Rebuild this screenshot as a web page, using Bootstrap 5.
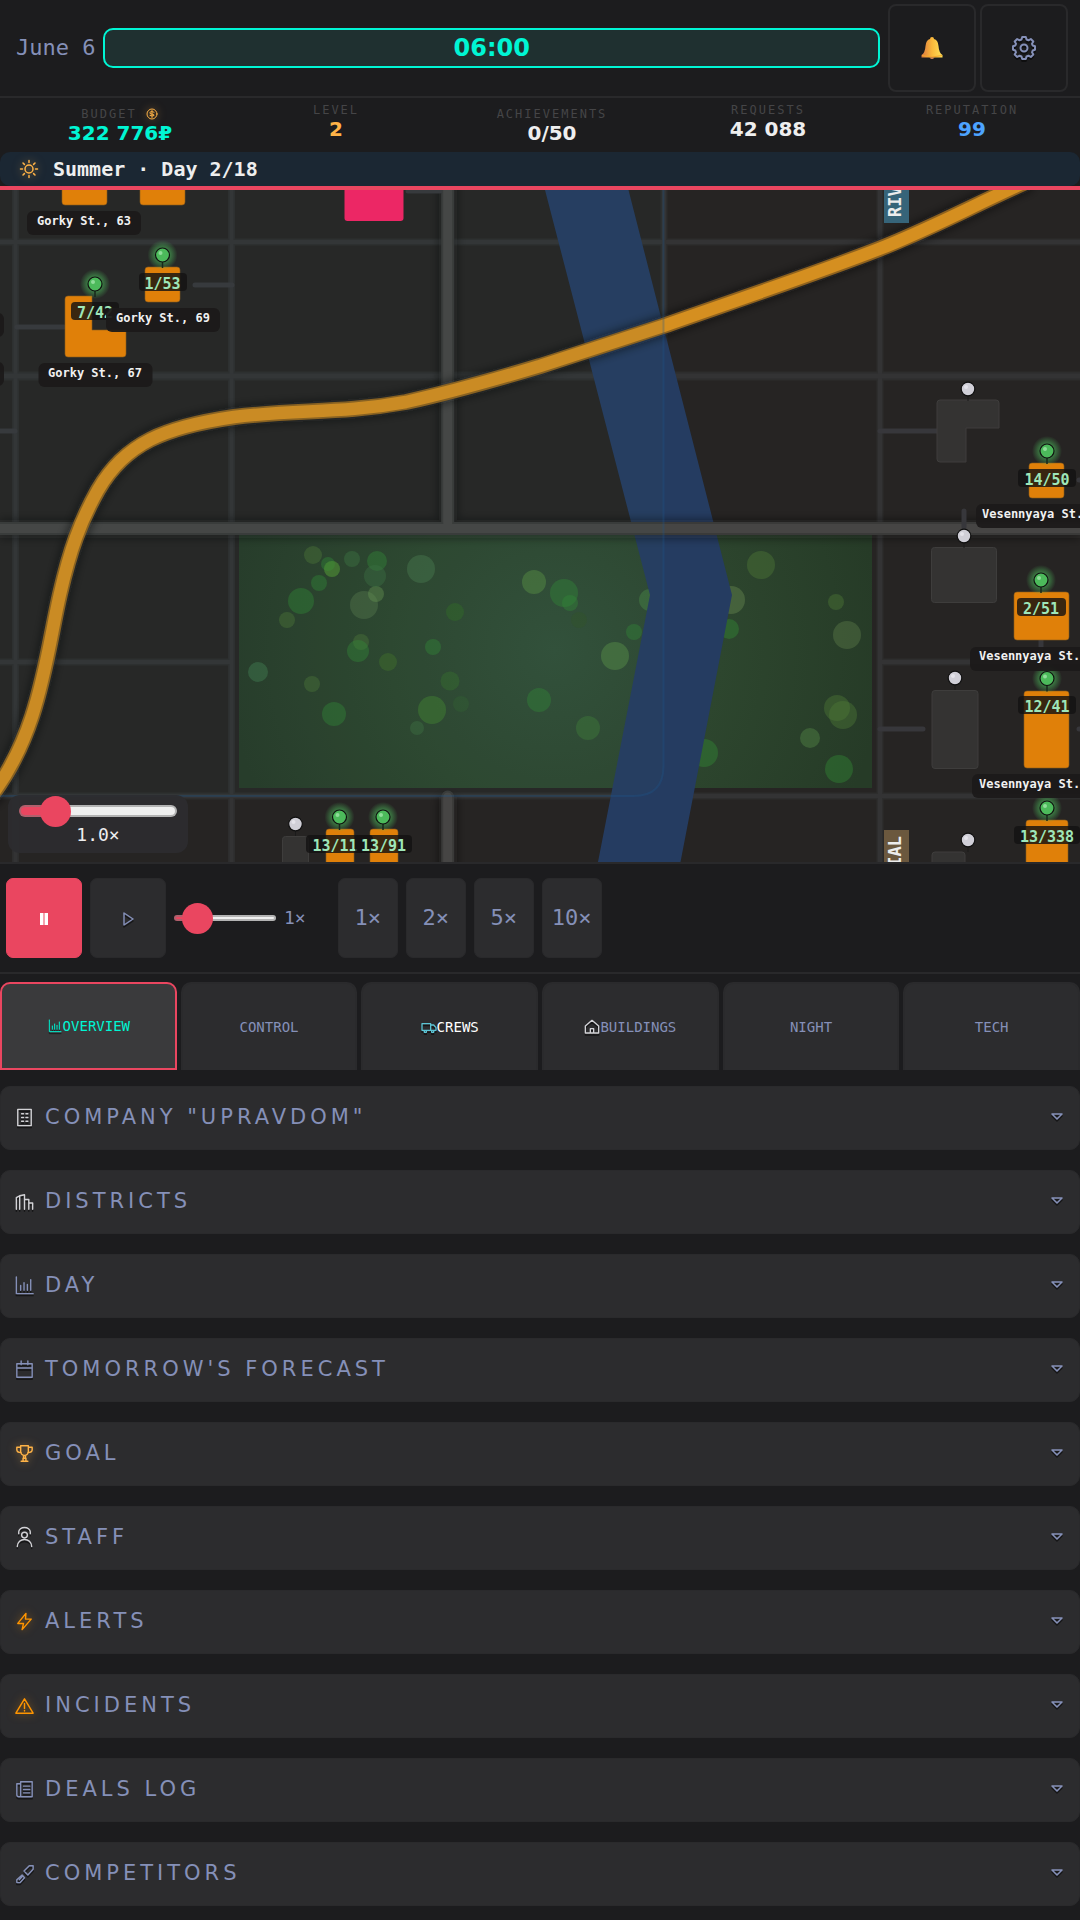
<!DOCTYPE html>
<html lang="en">
<head>
<meta charset="utf-8">
<meta name="viewport" content="width=device-width, initial-scale=1">
<title>Upravdom</title>
<link href="https://cdn.jsdelivr.net/npm/bootstrap@5.3.0/dist/css/bootstrap.min.css" rel="stylesheet">
<script src="https://cdn.jsdelivr.net/npm/bootstrap@5.3.0/dist/js/bootstrap.bundle.min.js"></script>
<style>
:root{--bg:#1c1c1e;--surface:#2c2c2e;--line:#29292b;--muted:#8590b8;--accent:#ea4660;--mint:#00f5d4;--gold:#ffb347;--mono:"DejaVu Sans Mono",monospace;--wide:"DejaVu Sans",sans-serif}
body{background:var(--bg);color:#eee;font-family:var(--mono);line-height:24px;overflow-x:hidden}
button{font-family:var(--mono)}
.ico{fill:none;stroke:currentColor;stroke-width:1.5;stroke-linecap:round;stroke-linejoin:round;filter:drop-shadow(0 2px 0 rgba(0,0,0,.5));flex:none}
.ico-gold{color:var(--gold);filter:drop-shadow(0 0 4px rgba(255,179,71,.5))}
.ico-warn{color:#ff9500;filter:drop-shadow(0 0 4px rgba(255,149,0,.5))}
.ico-pale{color:#d2d2d6}
.topline{padding:4px 12px 4px 16px;border-bottom:2px solid var(--line)}
.today{font-size:22px;color:var(--muted)}
.clock{height:40px;border:2px solid var(--mint);border-radius:10px;background:#1f3030;color:var(--mint);font:700 24px/36px var(--wide)}
.tool{width:88px;height:88px;border:2px solid var(--line);border-radius:8px;background:none;color:var(--muted)}
.stats{display:grid;grid-template-columns:repeat(4,9fr) 8fr;padding:4px 12px 8px}
.stat-name{font-size:12px;line-height:16px;letter-spacing:2px;color:#454547;text-transform:uppercase}
.stat-num{font:700 20px/22px var(--wide)}
.season{height:34px;padding-left:17px;border-radius:10px;background:#1b2733;font-size:20px;font-weight:700;gap:12px}
.city{height:35vh;min-height:480px;border-top:4px solid var(--accent);border-bottom:2px solid var(--line);box-sizing:content-box;background:#262423}
.city svg.plan{display:block;width:100%;height:100%}
.plan text{font-family:var(--mono);font-weight:700}
.zoombox{left:8px;bottom:9px;width:180px;height:58px;background:rgba(44,44,47,.95);border-radius:12px;padding:0 11px}
.zoombox output{font-size:18px;line-height:16px}
.slide{appearance:none;-webkit-appearance:none;display:block;background:none;height:32px;margin:0;padding:0}
.slide::-webkit-slider-runnable-track{height:var(--track);border:2px solid rgba(120,120,120,.5);border-radius:6px;background:linear-gradient(90deg,var(--accent) 0 20%,#efefef 20%);background-origin:border-box}
.slide::-webkit-slider-thumb{-webkit-appearance:none;width:31px;height:31px;border:0;border-radius:50%;background:var(--accent);margin-top:calc((var(--track) - 35px) / 2)}
.controls{padding:14px 6px;border-bottom:2px solid var(--line);gap:8px}
.key{height:80px;width:76px;border:1px solid var(--line);border-radius:7px;background:var(--surface);color:var(--muted);font-size:22px;padding:0}
.key-speed{width:60px}
.key-on{background:var(--accent);border-color:var(--accent);color:#fff}
.tabs{padding-top:8px;gap:4px}
.tabs button{flex:1 1 0;min-width:0;height:88px;border:2px solid #2a2a2c;border-bottom:0;border-radius:10px 10px 0 0;background:var(--surface);color:var(--muted);font-size:14px;padding:0}
.tabs button.on{border:2px solid var(--accent);background:#3a3a3c;color:var(--mint)}
.panels{padding:16px 0 14px;gap:20px}
.fold{height:64px;padding:0 12px 2px;border:1px solid #2a2a2c;border-radius:10px;background:var(--surface);color:var(--muted);gap:9px}
.fold-name{font:400 21px/24px var(--wide);letter-spacing:4px;text-transform:uppercase}
</style>
</head>
<body>
<svg width="0" height="0" class="position-absolute" aria-hidden="true"><defs>
<symbol id="i-chart" viewBox="0 0 24 24"><path d="M3.5 3v17.500H21M8 17v-5M11.500 17V9M15 17v-6M18.500 17V6"/></symbol>
<symbol id="i-home" viewBox="0 0 24 24"><path d="M2 21V10.500L12 2l10 8.500V21zM9.500 21v-6.500h5V21"/></symbol>
<symbol id="i-truck" viewBox="0 0 24 24"><path d="M1.500 7h13v10h-13zM14.500 9h4.500l3.500 4v4h-8M5 17v3h3v-3M16 17v3h3v-3"/></symbol>
<symbol id="i-block" viewBox="0 0 24 24"><path d="M5 3.500h14v17H5zM9 8h2M13.500 8h2M9 12h2M13.500 12h2M9 16h2M13.500 16h2"/></symbol>
<symbol id="i-district" viewBox="0 0 24 24"><path d="M3.500 20V8L7 6v14M7 6l5-1v15M12 10h4.500v10M16.500 13.500h4V20"/></symbol>
<symbol id="i-cal" viewBox="0 0 24 24"><path d="M4 6h16v14H4zM4 10.500h16M8.500 3v4M15.500 3v4"/></symbol>
<symbol id="i-cup" viewBox="0 0 24 24"><path d="M8 4h8v6a4 4 0 0 1-8 0zM8 5.500H4V8q0 3 4.500 3M16 5.500h4V8q0 3-4.500 3M11 14v3h2v-3M10.500 17v3M13.500 17v3M8.500 20h7"/></symbol>
<symbol id="i-staff" viewBox="0 0 24 24"><path d="M4.500 21.500c0-10 15-10 15 0M6 8V6a6 4.500 0 0 1 12 0v2"/><circle cx="12" cy="9.500" r="3"/></symbol>
<symbol id="i-bolt" viewBox="0 0 24 24"><path d="M13.500 3.500 5 14h6l-1.500 6.500L19 9.500h-6z"/></symbol>
<symbol id="i-warn" viewBox="0 0 24 24"><path d="M12 5 21 20H3zM12 10v5M12 17.300v.4"/></symbol>
<symbol id="i-log" viewBox="0 0 24 24"><path d="M8 4h12v15.500H6a2 2 0 0 1-2-2V6h4M8 4v15M11 8.500h6.500M11 12h6.500M11 15.500h6.500"/></symbol>
<symbol id="i-rival" viewBox="0 0 24 24"><path d="M11.500 9.500 17 4h4v3.500l-5.500 6zM9.500 13.500 4 18.500v3h3.500l4.500-5zM6.500 18.500l3-3"/></symbol>
<symbol id="i-down" viewBox="0 0 20 20"><path d="M5 7h10l-5 5z"/></symbol>
<symbol id="i-gear" viewBox="0 0 24 24"><circle cx="12" cy="12" r="3.500"/><path d="M9.500 3.500 10.200 1h3.600l.7 2.500 2 .8 2.300-1.300 2.500 2.500L20 7.800l.7 1.700L23 10.200v3.600l-2.300.7-.7 1.800 1.300 2.200-2.500 2.500-2.300-1.300-2 .8-.7 2.500h-3.600l-.7-2.500-2-.8L5.200 21l-2.500-2.500L4 16.300l-.7-1.800L1 13.800v-3.600l2.300-.7L4 7.800 2.700 5.500 5.200 3l2.300 1.300z"/></symbol>
</defs></svg>

<header>
<div class="topline d-flex align-items-center gap-2">
<span class="today">June 6</span>
<div class="clock flex-grow-1 text-center">06:00</div>
<div class="d-flex gap-1">
<button type="button" class="tool" aria-label="Notifications"><svg width="22" height="24" viewBox="0 0 22 24"><defs><linearGradient id="bell" x1="0" x2="1"><stop offset="0" stop-color="#d9773f"/><stop offset=".5" stop-color="#fbb93b"/><stop offset="1" stop-color="#ffe25a"/></linearGradient></defs><path d="M11 1q2 0 2 2 4 1 4.500 7 .5 7 4 9v2.500H.5V19q3.500-2 4-9Q5 4 9 3q0-2 2-2z" fill="url(#bell)"/><path d="M1 19.500q10 3 20 0" stroke="#f3a62c" fill="none"/><path d="M8.500 21.500h5q-2.500 3-5 0z" fill="#d98a5b"/></svg></button>
<button type="button" class="tool" aria-label="Settings"><svg class="ico" width="24" height="24" style="stroke-width:2"><use href="#i-gear"/></svg></button>
</div>
</div>
<div class="stats text-center">
<div class="pt-1"><div class="stat-name d-flex justify-content-center align-items-center gap-2"><span>Budget</span><svg class="ico ico-gold" width="14" height="14" viewBox="0 0 14 14" style="stroke-width:1"><circle cx="7" cy="7" r="5"/><path d="M9 5.200q-4-1.500-4 .5t2 1.300q2.500.5 2 1.500-1.500 1-4 0M7 3.500v7"/></svg></div><div class="stat-num" style="color:var(--mint)">322 776₽</div></div>
<div><div class="stat-name">Level</div><div class="stat-num" style="color:var(--gold)">2</div></div>
<div class="pt-1"><div class="stat-name">Achievements</div><div class="stat-num">0/50</div></div>
<div><div class="stat-name">Requests</div><div class="stat-num">42 088</div></div>
<div><div class="stat-name">Reputation</div><div class="stat-num" style="color:#4da3ff">99</div></div>
</div>
<div class="season d-flex align-items-center"><svg class="ico ico-gold" width="24" height="24" viewBox="0 0 24 24"><circle cx="12" cy="12" r="4"/><path d="M12 3.500v2M12 18.500v2M3.500 12h2M18.500 12h2M6 6l1.400 1.400M16.600 16.600 18 18M18 6l-1.400 1.400M7.400 16.600 6 18"/></svg><span>Summer · Day 2/18</span></div>
</header>

<main>
<section class="city position-relative overflow-hidden" aria-label="City map">
<svg class="plan" viewBox="0 190 1080 672" preserveAspectRatio="xMidYMid slice">
<defs>
<radialGradient id="lawn" gradientUnits="userSpaceOnUse" cx="555" cy="650" r="330"><stop offset="0" stop-color="#325038"/><stop offset=".5" stop-color="#2d462e"/><stop offset="1" stop-color="#263b27"/></radialGradient>
<radialGradient id="glow"><stop offset=".4" stop-color="#4cba5b" stop-opacity=".65"/><stop offset="1" stop-color="#4cba5b" stop-opacity="0"/></radialGradient>
<filter id="haze" x="-5%" y="-5%" width="110%" height="110%"><feGaussianBlur stdDeviation="5"/></filter>
<g id="pin-on"><circle r="15" fill="url(#glow)"/><path d="M0 7v6" stroke="#18291c" stroke-width="1.500"/><circle r="7" fill="#4cba5b" stroke="#101010" stroke-width="1.200"/><circle cx="-2" cy="-2" r="2" fill="#8fdc99"/></g>
<g id="pin-off"><path d="M0 7v5" stroke="#1b1b1b"/><circle r="6.800" fill="#d0cfd7" stroke="#101010" stroke-width="1.200"/><circle cx="-2" cy="-2" r="2" fill="#e4e3ea"/></g>
</defs>
<g fill="none" stroke="#2d2d2d" stroke-width="7"><path d="M15.500 190v672M231.500 190v672M664 190v338M880 190v672M0 242h1080M0 662h231M880 662h200M0 796h1080"/><path d="M0 376h1080" stroke-width="9"/></g>
<g fill="none" stroke="#333334" stroke-width="4"><path d="M15.500 190v672M231.500 190v672M664 190v338M880 190v672M0 242h1080M0 662h231M880 662h200M0 796h1080"/><path d="M0 376h1080" stroke-width="5"/></g>
<rect x="239" y="530" width="633" height="258" fill="url(#lawn)"/>
<g fill-opacity=".42">
<g fill="#4f7a36"><circle cx="313" cy="555" r="9"/><circle cx="332" cy="569" r="8"/><circle cx="287" cy="620" r="8"/><circle cx="312" cy="684" r="8"/><circle cx="364" cy="605" r="14" fill="#587d4c"/><circle cx="376" cy="594" r="8" fill="#6a9850"/><circle cx="361" cy="642" r="8"/><circle cx="534" cy="582" r="12" fill="#609a45"/><circle cx="615" cy="656" r="14" fill="#609a4a"/><circle cx="761" cy="565" r="14"/><circle cx="836" cy="602" r="8"/><circle cx="847" cy="635" r="14" fill="#5d7d49"/><circle cx="731" cy="600" r="14" fill="#6a8a50"/><circle cx="837" cy="708" r="13"/><circle cx="843" cy="715" r="14"/><circle cx="810" cy="738" r="10" fill="#568a48"/></g>
<g fill="#338a35"><circle cx="328" cy="564" r="7"/><circle cx="332" cy="569" r="8" fill="#4f9a2f"/><circle cx="319" cy="583" r="8"/><circle cx="301" cy="601" r="13"/><circle cx="352" cy="559" r="8" fill="#3d7a40"/><circle cx="377" cy="561" r="10"/><circle cx="375" cy="576" r="11" fill="#3c7340"/><circle cx="421" cy="569" r="14" fill="#4d8050"/><circle cx="455" cy="612" r="9" fill="#337024"/><circle cx="433" cy="647" r="8"/><circle cx="358" cy="651" r="11"/><circle cx="388" cy="662" r="9" fill="#437828"/><circle cx="258" cy="672" r="10" fill="#458555"/><circle cx="334" cy="714" r="12"/><circle cx="450" cy="681" r="9.500" fill="#37732c"/><circle cx="432" cy="710" r="14" fill="#458e30"/><circle cx="461" cy="704" r="8" fill="#31602f"/><circle cx="417" cy="728" r="7" fill="#3d7540"/><circle cx="564" cy="593" r="14"/><circle cx="570" cy="603" r="8"/><circle cx="579" cy="620" r="8" fill="#315327"/><circle cx="634" cy="632" r="8"/><circle cx="650" cy="600" r="11" fill="#4d9048"/><circle cx="539" cy="700" r="12"/><circle cx="588" cy="728" r="12" fill="#408038"/><circle cx="729" cy="629" r="10"/><circle cx="704" cy="753" r="14"/><circle cx="839" cy="769" r="14"/></g>
</g>
<path d="M545 190h83.500L732 595 680.500 862H598L650 595z" fill="#253c61"/>
<g fill="none"><path d="M447.700 180v342M447.700 797v75M0 529h1080" stroke="#151515" stroke-opacity=".5" stroke-width="18" filter="url(#haze)"/><path d="M447.700 180v348M447.700 797v75M-8 528.500h1096" stroke="#3a3a39" stroke-width="13" stroke-linecap="round"/><path d="M447.700 180v343M447.700 797v75M-8 528.500h1096" stroke="#464544" stroke-width="9" stroke-linecap="round"/></g>
<g stroke="#37373b" stroke-width="5" stroke-linecap="round" fill="none"><path d="M195 285h37M17 327h47M-3 431h18M408 191h32M880 431h57M880 729h43M964 511v16M1041 640v9M1079 480h5M1079 729h5"/></g>
<g fill="none"><path d="M-12 800C40 735 46 655 60 594 70 550 80 522 98 490c27-47 67-63 136-73 66-8 106-3 172-15 54-12 94-24 134-36 80-26 120-39 123-40 77-27 157-54 216-77 51-20 91-42 151-69" stroke="#111" stroke-opacity=".55" stroke-width="20" filter="url(#haze)"/><path d="M-12 800C40 735 46 655 60 594 70 550 80 522 98 490c27-47 67-63 136-73 66-8 106-3 172-15 54-12 94-24 134-36 80-26 120-39 123-40 77-27 157-54 216-77 51-20 91-42 151-69" stroke="#8f621e" stroke-width="16"/><path d="M-12 800C40 735 46 655 60 594 70 550 80 522 98 490c27-47 67-63 136-73 66-8 106-3 172-15 54-12 94-24 134-36 80-26 120-39 123-40 77-27 157-54 216-77 51-20 91-42 151-69" stroke="#d58f20" stroke-width="12.500"/></g>
<path d="M-9 180H663.500V766q0 30-30 30H-9z" fill="#35665f" fill-opacity=".07" stroke="#1e5a92" stroke-opacity=".28" stroke-width="2"/>
<g fill="#e08009" stroke="#8a5a1c" stroke-width=".6"><rect x="62" y="180" width="45" height="25" rx="3"/><rect x="140" y="180" width="45" height="25" rx="3"/><path d="M68 296h24v34h34v24q0 3-3 3H68q-3 0-3-3v-55q0-3 3-3z"/><rect x="145" y="267" width="35" height="35" rx="3"/><rect x="1029" y="463" width="35" height="35" rx="3"/><rect x="1014" y="592" width="55" height="48" rx="3"/><rect x="1024" y="691" width="45" height="77" rx="3"/><rect x="1026" y="820" width="42" height="60" rx="3"/><rect x="326" y="829" width="28" height="50" rx="3"/><rect x="370" y="829" width="28" height="50" rx="3"/></g>
<rect x="344.500" y="180" width="59" height="41" rx="3" fill="#ec2765"/>
<g fill="#343332" stroke="#3e3d3c"><path d="M940 400h56q3 0 3 3v25h-33v34h-26q-3 0-3-3v-56q0-3 3-3z"/><rect x="931.500" y="547.500" width="65" height="55" rx="3"/><rect x="932" y="690.500" width="46" height="78" rx="3"/><rect x="932" y="852" width="33" height="30" rx="3"/><rect x="282.500" y="836.500" width="26" height="40" rx="3"/></g>
<use href="#pin-off" x="968" y="389"/><use href="#pin-off" x="964" y="536"/><use href="#pin-off" x="955" y="678"/><use href="#pin-off" x="968" y="840"/><use href="#pin-off" x="295.500" y="824"/>
<use href="#pin-on" x="95" y="284"/><use href="#pin-on" x="162.500" y="255"/><use href="#pin-on" x="1047" y="451"/><use href="#pin-on" x="1041" y="580"/><use href="#pin-on" x="1047" y="678.500"/><use href="#pin-on" x="1047" y="808"/><use href="#pin-on" x="339.500" y="817"/><use href="#pin-on" x="383" y="817"/>
<g font-size="15" text-anchor="middle" fill="#9fe6b9">
<g fill="#141212" fill-opacity=".82"><rect x="71" y="302" width="48" height="18" rx="4"/><rect x="139" y="273" width="48" height="18" rx="4"/><rect x="1018" y="469" width="58" height="18" rx="4"/><rect x="1017" y="598" width="49" height="18" rx="4"/><rect x="1018" y="696" width="58" height="18" rx="4"/><rect x="1014" y="826" width="66" height="18" rx="4"/><rect x="306" y="835" width="67" height="18" rx="4"/></g>
<text x="95" y="318">7/42</text><text x="162.500" y="289">1/53</text><text x="1047" y="485">14/50</text><text x="1041" y="614">2/51</text><text x="1047" y="712">12/41</text><text x="1047" y="842">13/338</text><text x="335" y="851">13/11</text>
<rect x="355" y="835" width="57" height="18" rx="4" fill="#141212" fill-opacity=".82"/><text x="383.500" y="851">13/91</text>
</g>
<g fill="#1c1a1a" fill-opacity=".94"><rect x="27" y="211" width="114" height="24" rx="6"/><rect x="38.500" y="363" width="114" height="24" rx="6"/><rect x="106" y="308" width="114" height="24" rx="6"/><rect x="-20" y="313" width="24" height="24" rx="6"/><rect x="-20" y="362" width="24" height="24" rx="6"/><rect x="976" y="504" width="130" height="24" rx="6"/><rect x="970" y="647" width="130" height="24" rx="6"/><rect x="972" y="774" width="130" height="24" rx="6"/></g>
<g font-size="12" fill="#f1f1f1"><text x="37" y="225">Gorky St., 63</text><text x="48" y="377">Gorky St., 67</text><text x="116" y="322">Gorky St., 69</text><text x="982" y="518">Vesennyaya St.</text><text x="979" y="660">Vesennyaya St.</text><text x="979" y="788">Vesennyaya St.</text></g>
<rect x="884" y="180" width="25" height="43" fill="#366479"/><rect x="884" y="830" width="25" height="43" fill="#6b583e"/>
<g font-size="17" fill="#ececec"><text transform="translate(901 217) rotate(-90)">RIV</text><text transform="translate(901 836) rotate(-90)" text-anchor="end">IAL</text></g>
</svg>
<div class="zoombox position-absolute text-center">
<input class="slide w-100" style="--track:12px" type="range" id="zoom" min="0.5" max="3.8" step="0.1" value="1" aria-label="Map zoom">
<output for="zoom" class="d-block">1.0×</output>
</div>
</section>

<div class="controls d-flex align-items-center">
<button type="button" class="key key-on" aria-label="Pause"><svg width="8" height="12" viewBox="0 0 8 12" fill="currentColor"><path d="M0 0h3.500v12H0zM4.500 0H8v12H4.500z"/></svg></button>
<button type="button" class="key" aria-label="Play"><svg class="ico" width="20" height="20" viewBox="0 0 20 20"><path d="M6 4v12l9-6z"/></svg></button>
<div class="d-flex align-items-center gap-2 pe-4"><input class="slide" style="--track:6px;width:102px" type="range" id="speed" min="0" max="11" value="1" aria-label="Game speed"><output for="speed" style="color:var(--muted);font-size:18px">1×</output></div>
<button type="button" class="key key-speed">1×</button>
<button type="button" class="key key-speed">2×</button>
<button type="button" class="key key-speed">5×</button>
<button type="button" class="key key-speed">10×</button>
</div>

<nav class="tabs d-flex" aria-label="Sections">
<button type="button" class="on d-flex align-items-center justify-content-center"><svg class="ico" width="16" height="16"><use href="#i-chart"/></svg>OVERVIEW</button>
<button type="button">CONTROL</button>
<button type="button" class="d-flex align-items-center justify-content-center text-white"><svg class="ico" style="color:#5cc4d4;stroke-width:2" width="16" height="16"><use href="#i-truck"/></svg>CREWS</button>
<button type="button" class="d-flex align-items-center justify-content-center"><svg class="ico ico-pale" width="16" height="16" style="stroke-width:2"><use href="#i-home"/></svg>BUILDINGS</button>
<button type="button">NIGHT</button>
<button type="button">TECH</button>
</nav>

<div class="panels d-flex flex-column">
<button type="button" class="fold d-flex align-items-center"><svg class="ico ico-pale" width="23" height="23"><use href="#i-block"/></svg><span class="fold-name">Company "Upravdom"</span><svg class="ico ms-auto" width="20" height="20"><use href="#i-down"/></svg></button>
<button type="button" class="fold d-flex align-items-center"><svg class="ico ico-pale" width="23" height="23"><use href="#i-district"/></svg><span class="fold-name">Districts</span><svg class="ico ms-auto" width="20" height="20"><use href="#i-down"/></svg></button>
<button type="button" class="fold d-flex align-items-center"><svg class="ico" width="23" height="23"><use href="#i-chart"/></svg><span class="fold-name">Day</span><svg class="ico ms-auto" width="20" height="20"><use href="#i-down"/></svg></button>
<button type="button" class="fold d-flex align-items-center"><svg class="ico" width="23" height="23"><use href="#i-cal"/></svg><span class="fold-name">Tomorrow's forecast</span><svg class="ico ms-auto" width="20" height="20"><use href="#i-down"/></svg></button>
<button type="button" class="fold d-flex align-items-center"><svg class="ico ico-gold" width="23" height="23"><use href="#i-cup"/></svg><span class="fold-name">Goal</span><svg class="ico ms-auto" width="20" height="20"><use href="#i-down"/></svg></button>
<button type="button" class="fold d-flex align-items-center"><svg class="ico ico-pale" width="23" height="23"><use href="#i-staff"/></svg><span class="fold-name">Staff</span><svg class="ico ms-auto" width="20" height="20"><use href="#i-down"/></svg></button>
<button type="button" class="fold d-flex align-items-center"><svg class="ico ico-warn" width="23" height="23"><use href="#i-bolt"/></svg><span class="fold-name">Alerts</span><svg class="ico ms-auto" width="20" height="20"><use href="#i-down"/></svg></button>
<button type="button" class="fold d-flex align-items-center"><svg class="ico ico-warn" width="23" height="23"><use href="#i-warn"/></svg><span class="fold-name">Incidents</span><svg class="ico ms-auto" width="20" height="20"><use href="#i-down"/></svg></button>
<button type="button" class="fold d-flex align-items-center"><svg class="ico" width="23" height="23"><use href="#i-log"/></svg><span class="fold-name">Deals log</span><svg class="ico ms-auto" width="20" height="20"><use href="#i-down"/></svg></button>
<button type="button" class="fold d-flex align-items-center"><svg class="ico" width="23" height="23"><use href="#i-rival"/></svg><span class="fold-name">Competitors</span><svg class="ico ms-auto" width="20" height="20"><use href="#i-down"/></svg></button>
</div>
</main>
</body>
</html>
